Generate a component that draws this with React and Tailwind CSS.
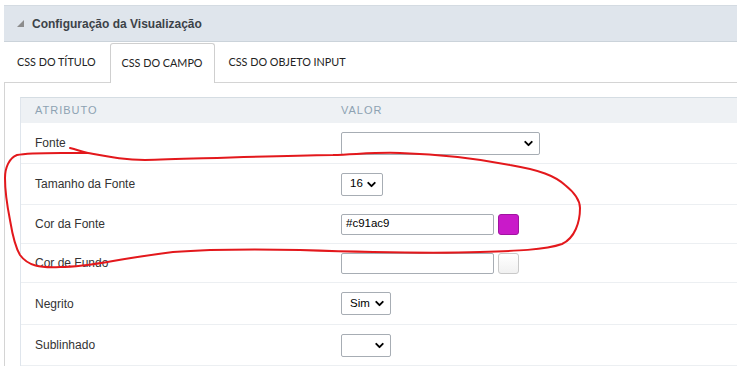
import { ChevronDown } from 'lucide-react';

const rows = [
  { label: 'Fonte', kind: 'select', width: 'w-[199px]', value: '', h: 'h-[41px]' },
  { label: 'Tamanho da Fonte', kind: 'select', width: 'w-[42px]', value: '16', h: 'h-[41px]' },
  { label: 'Cor da Fonte', kind: 'color', value: '#c91ac9', swatch: 'bg-[#c91ac9] border-[#a014a0]', h: 'h-[39px]' },
  { label: 'Cor de Fundo', kind: 'color', value: '', swatch: 'bg-gradient-to-b from-white to-[#f1f1f1] border-[#c9c9c9]', h: 'h-[39px]' },
  { label: 'Negrito', kind: 'select', width: 'w-[50px]', value: 'Sim', h: 'h-[42px]' },
  { label: 'Sublinhado', kind: 'select', width: 'w-[50px]', value: '', h: 'h-[41px]' },
];

const Select = ({ width, value }) => (
  <div className={`${width} h-[23px] border border-[#a7adb4] rounded-[2px] bg-white flex items-center justify-between pl-[8px] pr-[4px] text-[11.5px] text-black`}>
    <span>{value}</span>
    <ChevronDown size={13} strokeWidth={3.5} className="text-black" />
  </div>
);

const ColorField = ({ value, swatch }) => (
  <div className="flex items-center gap-[4px]">
    <div className="w-[153px] h-[21px] border border-[#a7adb4] rounded-[2px] bg-white flex items-center pl-[4px] text-[11.5px] text-black">
      {value}
    </div>
    <div className={`w-[21px] h-[21px] rounded-[3px] border ${swatch}`} />
  </div>
);

const Tab = ({ children, active }) => (
  <div
    className={
      active
        ? 'relative z-10 -mb-px h-[40px] px-[11px] mr-[2px] flex items-center bg-white border border-b-0 border-[#cfcfcf] rounded-t-[3px]'
        : 'h-[39px] px-[11px] mr-[2px] flex items-center border border-transparent'
    }
  >
    <span className="font-['Lato',sans-serif] text-[10.8px] text-[#222]">{children}</span>
  </div>
);

export default function App() {
  return (
    <div className="relative w-[737px] h-[368px] overflow-hidden bg-white font-['Liberation_Sans',Arial,sans-serif]">
      <div className="pt-[5px] pl-[4px]">
        <div className="h-[37px] bg-[#dfe5ec] border-t border-b border-t-[#d4dbe2] border-b-[#cbd3da] flex items-center pl-[13px] gap-[8px]">
          <svg width="7" height="7" viewBox="0 0 7 7">
            <polygon points="0,7 7,0 7,7" fill="#8c8c8c" />
          </svg>
          <span className="text-[12px] font-bold text-[#3c4248]">Configuração da Visualização</span>
        </div>

        <div className="flex items-end h-[40px] pl-px">
          <Tab>CSS DO TÍTULO</Tab>
          <Tab active>CSS DO CAMPO</Tab>
          <Tab>CSS DO OBJETO INPUT</Tab>
        </div>

        <div className="border-l border-t border-[#d4d4d4] pl-[15px] pt-[14px]">
          <div className="border-l border-t border-l-[#dfe5ec] border-t-[#d5dde3]">
            <div className="flex h-[25px] items-center bg-[#eef1f4] text-[11px] tracking-[1px] text-[#8da2b2]">
              <div className="w-[305px] pl-[14px]">ATRIBUTO</div>
              <div className="pl-[15px]">VALOR</div>
            </div>
            {rows.map((r) => (
              <div key={r.label} className={`flex items-center ${r.h} border-b border-[#eceff2]`}>
                <div className="w-[305px] pl-[14px] text-[12px] text-[#333]">{r.label}</div>
                <div className="pl-[15px]">
                  {r.kind === 'select' ? (
                    <Select width={r.width} value={r.value} />
                  ) : (
                    <ColorField value={r.value} swatch={r.swatch} />
                  )}
                </div>
              </div>
            ))}
          </div>
        </div>
      </div>

      <svg className="absolute inset-0 pointer-events-none" width="737" height="368" viewBox="0 0 737 368" fill="none">
        <path
          d="M119,75 C135,72 150,71 165,71 C178,71 186,71 192,72"
          stroke="#e3181c"
          strokeWidth="2"
          strokeLinecap="round"
        />
        <path
          d="M70,148 C78,150 82,152 88,153 C110,157 125,160 145,160 C190,159 260,156 333,155 C360,154 380,152 400,153 C430,154 470,157 510,165 C540,170 555,176 565,185 C575,193 580,200 580,208 C580,222 575,238 562,244 C545,250 515,251 480,252 C420,254 360,252 300,250 C250,249 200,250 173,252 C150,255 130,258 113,261 C90,265 75,267 60,267 C40,268 28,266 20,255 C14,245 12,232 10,220 C7,205 5,190 5,178 C5,168 9,158 17,155 C30,152 60,153 88,153"
          stroke="#e3181c"
          strokeWidth="2"
          strokeLinecap="round"
          strokeLinejoin="round"
        />
      </svg>
    </div>
  );
}
